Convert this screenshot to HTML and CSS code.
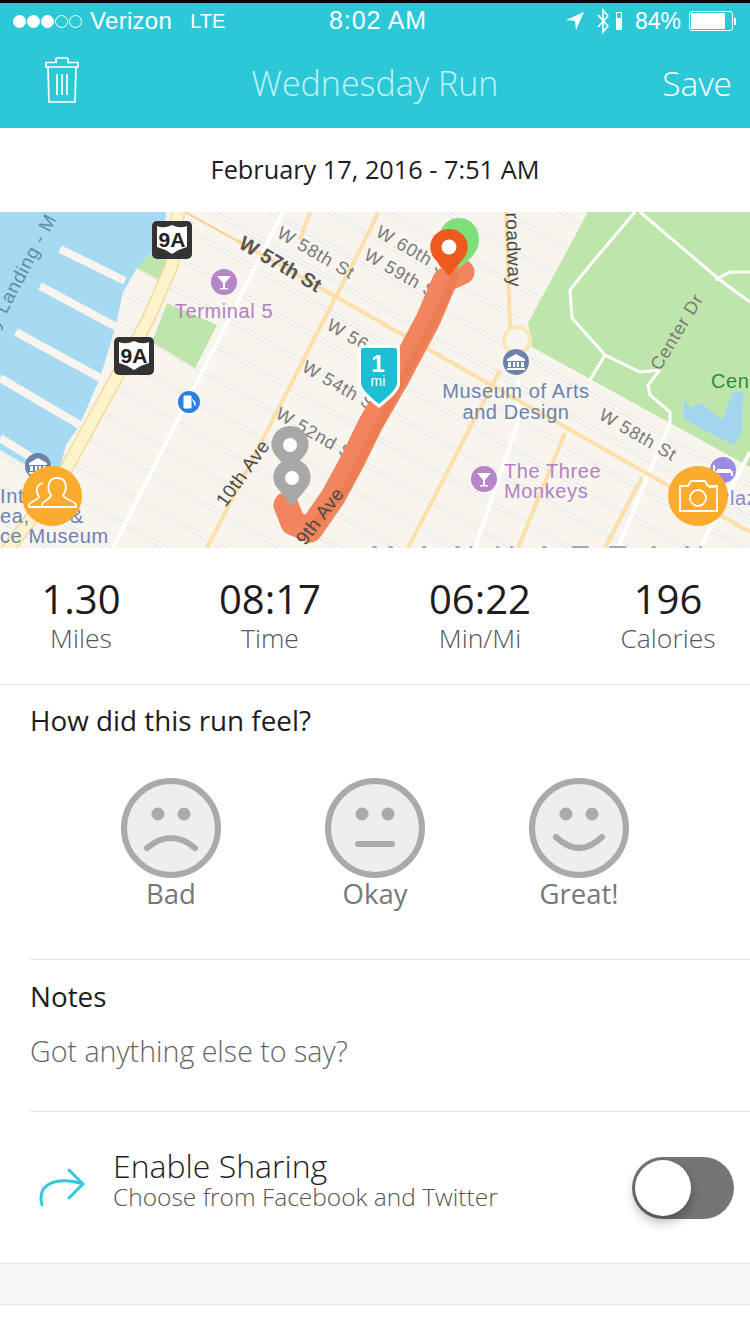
FILE: index.html
```html
<!DOCTYPE html>
<html lang="en">
<head>
<meta charset="utf-8">
<title>Wednesday Run</title>
<link rel="stylesheet" href="styles.css">
</head>
<body>
<div class="phone">
  <header class="head">
    <div class="status">
      <div class="status-left">
        <span class="sig on"></span><span class="sig on"></span><span class="sig on"></span><span class="sig"></span><span class="sig"></span>
        <span class="carrier">Verizon</span><span class="lte">LTE</span>
      </div>
      <div class="clock">8:02 AM</div>
      <div class="status-right">
        <svg class="st-loc" viewBox="0 0 18 18"><path d="M18 0 L0 8 L9 9 L10 18 Z" fill="#fff"/></svg>
        <svg class="st-bt" viewBox="0 0 12 26"><path d="M1 7 L11 18 L6 24 V2 L11 8 L1 19" fill="none" stroke="#fff" stroke-width="1.6"/></svg>
        <span class="st-mini"></span>
        <span class="pct">84%</span>
        <span class="batt"><span class="batt-fill"></span></span><span class="nub"></span>
      </div>
    </div>
    <nav class="nav">
      <svg class="trash" viewBox="0 0 34 46" fill="none" stroke="#fff" stroke-width="1.7">
        <path d="M1 10 V5.5 H11 V2 Q11 1 12 1 H22 Q23 1 23 2 V5.5 H33 V10 Z"/>
        <path d="M3 10 L4 45 H30 L31 10"/>
        <path d="M12 17 V38 M17 17 V38 M22 17 V38"/>
      </svg>
      <div class="title">Wednesday Run</div>
      <div class="save">Save</div>
    </nav>
  </header>

  <div class="date">February 17, 2016 - 7:51 AM</div>

  <svg class="map" viewBox="0 212 750 336">
    <defs>
      <pattern id="cross" width="300" height="28.7" patternUnits="userSpaceOnUse" patternTransform="rotate(29.7 0 212) translate(0 6)">
        <rect y="12.4" width="300" height="3.6" fill="#dedad4"/>
        <rect y="13.2" width="300" height="2" fill="#fff"/>
      </pattern>
      <g id="shield">
        <rect x="-20" y="-19" width="40" height="38" rx="5" fill="#333"/>
        <path d="M-15 -14 Q-8 -11 0 -15 Q8 -11 15 -14 V7 Q7 9 0 14 Q-7 9 -15 7 Z" fill="#fff"/>
      </g>
      <g id="martini">
        <path d="M-7 -6 H7 L1 1 V6 H4 V7.5 H-4 V6 H-1 V1 Z" fill="#fff"/>
      </g>
      <g id="museum">
        <path d="M0 -8 L9 -3 V-1 H-9 V-3 Z M-8 0 H-5 V5 H-8 Z M-3 0 H-0.8 V5 H-3 Z M0.8 0 H3 V5 H0.8 Z M5 0 H8 V5 H5 Z M-9 6 H9 V8 H-9 Z" fill="#fff"/>
      </g>
    </defs>
    <rect x="0" y="212" width="750" height="336" fill="#f8f4ee"/>
    <rect x="0" y="212" width="750" height="336" fill="url(#cross)"/>

    <path class="water" d="M0 212 H166 L163 240 L137 268 L123 292 L116 325 L100 378 L79 426 L66 445 L56 482 L0 450 Z"/>
    <g class="pier">
      <path d="M60 249 L125 281"/><path d="M40 286 L122 330"/><path d="M16 332 L104 380"/><path d="M0 378 L80 425"/><path d="M0 438 L58 474"/>
    </g>
    <path class="green" d="M137 268 L163 240 L167 262 L160 281 Z"/>
    <path class="green" d="M167 303 L217 325 L195 368 L152 342 Z"/>
    <path class="green" d="M588 212 H750 V467 L532 347 L528 323 Z"/>
    <path class="lake" d="M684 400 L692 408 L700 402 L722 420 L733 392 H743 L742 430 L735 445 L733 445 L700 428 L684 418 Z"/>
    <g class="parkroad">
      <path d="M635 212 L590 265 L570 290 L572 318 L605 355 L640 372 L660 370"/>
      <path d="M640 212 L720 280 L750 302"/>
      <path d="M715 280 L730 272 H750"/>
      <path d="M660 370 L648 385 L650 395 L670 412 V423"/>
      <path d="M605 355 L590 380"/>
    </g>
    <g class="white-ave">
      <path d="M113 548 L283 212"/>
      <path d="M475 548 L518 423 V380"/>
      <path d="M670 423 L618 548"/>
      <path d="M750 452 L700 548"/>
    </g>
    <g class="yellow">
      <path d="M207 548 L370 230 L378 212"/>
      <path d="M408 548 L500 370"/>
      <path d="M518 548 L565 433"/>
      <path d="M605 548 L642 477"/>
      <path d="M236 240 L750 532"/>
      <path d="M510 355 V325 L506 212"/>
      <path d="M310 212 L300 240"/>
    </g>
    <path class="hw-edge" d="M0 560 L60 480 L148 320 L172 265 L178 212"/>
    <path class="hw" d="M0 560 L60 480 L148 320 L172 265 L178 212"/>
    <path class="edge-thin" d="M185 212 L245 245"/>
    <circle class="rotary" cx="517" cy="340" r="13"/>

    <text class="st" transform="rotate(30 313 258)" x="313" y="258">W 58th St</text>
    <text class="st major" transform="rotate(30 277 270)" x="277" y="270">W 57th St</text>
    <text class="st" transform="rotate(30 345 340)" x="345" y="340">W 56</text>
    <text class="st" transform="rotate(30 338 392)" x="338" y="392">W 54th St</text>
    <text class="st" transform="rotate(30 314 440)" x="314" y="440">W 52nd St</text>
    <text class="st" transform="rotate(30 412 257)" x="412" y="257">W 60th St</text>
    <text class="st" transform="rotate(30 400 280)" x="400" y="280">W 59th St</text>
    <text class="st" transform="rotate(30 635 440)" x="635" y="440">W 58th St</text>
    <text class="st" transform="rotate(-59 682 335)" x="682" y="335">Center Dr</text>
    <text class="st strong" transform="rotate(88 507 250)" x="507" y="250">roadway</text>
    <text class="st strong" transform="rotate(-54 248 477)" x="248" y="477">10th Ave</text>

    <path class="route" d="M462 272 L445 280 L428 320 L396 380 L370 425 L353 460 L333 497 L310 530 L293 523 L286 505"/>
    <path class="route-b" d="M455 275 L435 320 L402 380 L376 430 L345 490 L312 527"/>
    <text class="st strong" transform="rotate(-53 325 520)" x="325" y="520">9th Ave</text>

    <g transform="translate(172 240)"><use href="#shield"/><text class="sh" y="7">9A</text></g>
    <g transform="translate(134 356)"><use href="#shield"/><text class="sh" y="7">9A</text></g>

    <circle class="poi-purple" cx="224" cy="282" r="13"/><use href="#martini" x="224" y="282"/>
    <text class="lbl purple" x="224" y="318">Terminal 5</text>
    <circle class="poi-blue" cx="189" cy="402" r="11"/>
    <path d="M184 396 H191 V408 H184 Z M192 399 L195 402 V406" fill="#fff" stroke="#fff"/>

    <circle class="poi-museum" cx="516" cy="362" r="13"/><use href="#museum" x="516" y="362"/>
    <text class="lbl blue" x="516" y="398">Museum of Arts</text>
    <text class="lbl blue" x="516" y="419">and Design</text>

    <circle class="poi-purple" cx="484" cy="479" r="13"/><use href="#martini" x="484" y="479"/>
    <text class="lbl purple start" x="504" y="478">The Three</text>
    <text class="lbl purple start" x="504" y="498">Monkeys</text>

    <circle class="poi-museum" cx="38" cy="466" r="13"/><use href="#museum" x="38" y="466"/>
    <text class="lbl blue start" x="0" y="503">Int</text>
    <text class="lbl blue start" x="-14" y="523">Sea,</text>
    <text class="lbl blue start" x="70" y="523">&amp;</text>
    <text class="lbl blue start" x="0" y="543">ce Museum</text>

    <circle class="poi-hotel" cx="723" cy="470" r="13"/>
    <path d="M714 465 V476 M714 472 H732 V476 M717 470 H731" fill="none" stroke="#fff" stroke-width="2"/>
    <text class="lbl hotel start" x="716" y="505">Plaza</text>

    <text class="lbl green-t start" x="711" y="388">Cen</text>
    <text class="st water-t" transform="rotate(-62 26 277)" x="26" y="277">ry Landing - M</text>
    <text class="manh" x="370" y="566">MANHATTAN</text>

    <path d="M459 218 C472 218 479 229 479 240 C479 252 468 262 459 268 C450 262 439 252 439 240 C439 229 446 218 459 218 Z" fill="#7fe07a"/>
    <path d="M290 426 a18 18 0 0 1 14 30 L290 472 L276 456 a18 18 0 0 1 14 -30 Z" fill="#a8a8a8"/>
    <circle cx="290" cy="445" r="7" fill="#fff"/>
    <path d="M292 459 a18 18 0 0 1 14 30 L292 506 L278 489 a18 18 0 0 1 14 -30 Z" fill="#a8a8a8"/>
    <circle cx="292" cy="478" r="7" fill="#fff"/>
    <path d="M449 229 a18 18 0 0 1 15 29 L449 276 L434 258 a18 18 0 0 1 15 -29 Z" fill="#ee5a1e"/>
    <circle cx="449" cy="247" r="7.5" fill="#fff"/>

    <path d="M362 345 H396 Q400 345 400 349 V384 Q400 392 379 408 Q358 392 358 384 V349 Q358 345 362 345 Z" fill="#fff"/>
    <path d="M363 348 H395 Q397 348 397 350 V383 Q397 390 379 404 Q361 390 361 383 V350 Q361 348 363 348 Z" fill="#1ebfd2"/>
    <text class="mile-n" x="378" y="372">1</text>
    <text class="mile-u" x="378" y="386">mi</text>

    <circle cx="52" cy="496" r="30" fill="#fbab2d"/>
    <g fill="none" stroke="#fff" stroke-width="1.8" stroke-linejoin="round">
      <path d="M42 507 H76 V505 C76 501 64 500 63 495 C67 490 68 478 57 478 C47 478 47 490 51 495 C50 500 42 501 42 505 Z"/>
      <path d="M42 507 H29 V505 C29 502 38 500 39 497 C36 492 35 485 43 483"/>
    </g>
    <circle cx="698" cy="496" r="30" fill="#fbab2d"/>
    <g fill="none" stroke="#fff" stroke-width="1.8">
      <path d="M680 486 H688 L691 481 H705 L708 486 H717 V511 H680 Z"/>
      <circle cx="698" cy="498" r="8"/>
      <path d="M709 487 H715" />
    </g>
  </svg>

  <section class="stats">
    <div class="stat"><div class="num">1.30</div><div class="cap">Miles</div></div>
    <div class="stat"><div class="num">08:17</div><div class="cap">Time</div></div>
    <div class="stat"><div class="num">06:22</div><div class="cap">Min/Mi</div></div>
    <div class="stat last"><div class="num">196</div><div class="cap">Calories</div></div>
  </section>

  <section class="feel">
    <h2 class="h">How did this run feel?</h2>
    <div class="faces">
      <div class="face">
        <svg class="face-ic" viewBox="0 0 100 100"><circle class="f-c" cx="50" cy="50" r="47"/><circle class="f-e" cx="37" cy="36" r="6.5"/><circle class="f-e" cx="63" cy="36" r="6.5"/><path class="f-m" d="M26 70 Q50 50 74 70"/></svg>
        <div class="face-l">Bad</div>
      </div>
      <div class="face">
        <svg class="face-ic" viewBox="0 0 100 100"><circle class="f-c" cx="50" cy="50" r="47"/><circle class="f-e" cx="37" cy="36" r="6.5"/><circle class="f-e" cx="63" cy="36" r="6.5"/><path class="f-m" d="M33 66 H67"/></svg>
        <div class="face-l">Okay</div>
      </div>
      <div class="face">
        <svg class="face-ic" viewBox="0 0 100 100"><circle class="f-c" cx="50" cy="50" r="47"/><circle class="f-e" cx="37" cy="36" r="6.5"/><circle class="f-e" cx="63" cy="36" r="6.5"/><path class="f-m" d="M27 59 Q50 81 73 59"/></svg>
        <div class="face-l">Great!</div>
      </div>
    </div>
  </section>

  <section class="notes">
    <h2 class="h">Notes</h2>
    <div class="ph">Got anything else to say?</div>
  </section>

  <section class="share">
    <svg class="arrow" viewBox="0 0 48 42" fill="none" stroke="#35c9d9" stroke-width="3" stroke-linecap="round" stroke-linejoin="round">
      <path d="M31 3 L45 17 L31 31"/>
      <path d="M45 17 C22 10 -2 14 4 38"/>
    </svg>
    <div class="share-t">
      <div class="share-h">Enable Sharing</div>
      <div class="share-s">Choose from Facebook and Twitter</div>
    </div>
    <div class="toggle"><span class="knob"></span></div>
  </section>

  <div class="band"></div>
</div>
</body>
</html>
```
FILE: styles.css
```css
* { box-sizing: border-box; }
html, body { margin: 0; padding: 0; background: #fff; }
body { font-family: "Open Sans", "Lato", "Liberation Sans", sans-serif; width: 750px; height: 1334px; overflow: hidden; }
.phone { width: 750px; height: 1334px; display: flex; flex-direction: column; }

.head { background: #2dc8d8; height: 128px; border-top: 3px solid #000; color: #fff; }
.status { height: 36px; display: flex; align-items: center; position: relative; padding: 0 13px; font-family: "Liberation Sans", sans-serif; font-size: 24px; }
.status-left { display: flex; align-items: center; }
.sig { width: 13px; height: 13px; border-radius: 50%; border: 1px solid #fff; margin-right: 1px; }
.sig.on { background: #fff; }
.carrier { margin-left: 7px; letter-spacing: .3px; }
.lte { margin-left: 18px; font-size: 20px; }
.clock { position: absolute; left: 6px; right: 0; top: 3px; text-align: center; font-size: 25px; letter-spacing: .9px; }
.status-right { margin-left: auto; display: flex; align-items: center; padding-right: 1px; }
.st-loc { width: 18px; height: 18px; }
.st-bt { width: 12px; height: 26px; margin-left: 13px; }
.st-mini { width: 6px; height: 18px; border: 1px solid #fff; margin-left: 7px; background: linear-gradient(#2dc8d8 30%, #fff 30%); }
.pct { margin-left: 13px; font-size: 23px; }
.batt { width: 44px; height: 20px; border: 1px solid #fff; border-radius: 3px; margin-left: 8px; padding: 1px; display: flex; }
.batt-fill { width: 84%; background: #fff; border-radius: 1px; }
.nub { width: 2px; height: 7px; background: #fff; margin-left: 1px; }

.nav { height: 89px; display: flex; align-items: center; position: relative; padding: 0 18px 2px 45px; }
.trash { width: 34px; height: 46px; margin-top: -6px; }
.title { position: absolute; left: 0; right: 0; text-align: center; font-weight: 300; font-size: 34px; line-height: 44px; color: #c2f2f6; }
.save { margin-left: auto; font-size: 33.5px; line-height: 44px; font-weight: 300; }

.date { height: 84px; padding-bottom: 3px; display: flex; align-items: center; justify-content: center; font-size: 25.3px; color: #1d1d1d; }

.map { display: block; width: 750px; height: 336px; flex: none; }
.water { fill: #a6d9f2; }
.lake { fill: #a3d5ee; }
.pier path { stroke: #f8f4ee; stroke-width: 8; fill: none; }
.green { fill: #bfe6aa; }
.parkroad path { fill: none; stroke: #fff; stroke-width: 3; }
.white-ave path { fill: none; stroke: #fff; stroke-width: 4; }
.yellow path { fill: none; stroke: #fbe0aa; stroke-width: 4; }
.hw-edge { fill: none; stroke: #f8d898; stroke-width: 14; }
.hw { fill: none; stroke: #fdf3cd; stroke-width: 11; }
.edge-thin { fill: none; stroke: #f8d48f; stroke-width: 2; }
.rotary { fill: #f8f4ee; stroke: #fbe6b8; stroke-width: 4; }
.route { fill: none; stroke: #f0855e; stroke-width: 25; stroke-linecap: round; stroke-linejoin: round; }
.route-b { fill: none; stroke: #ec7448; stroke-width: 8; stroke-linecap: round; stroke-linejoin: round; opacity: .5; }

.st { font-family: "Liberation Sans", sans-serif; font-size: 18px; letter-spacing: .8px; fill: #7a7a7a; text-anchor: middle; }
.st.major { font-size: 20px; letter-spacing: 0; font-weight: 700; fill: #555; }
.st.strong { font-size: 19px; letter-spacing: .4px; fill: #4a4a4a; }
.st.water-t { fill: #5f8da5; font-size: 19px; }
.sh { font-family: "Liberation Sans", sans-serif; font-weight: 700; font-size: 21px; fill: #222; text-anchor: middle; }
.lbl { font-family: "Liberation Sans", sans-serif; font-size: 20px; text-anchor: middle; letter-spacing: .6px; }
.lbl.start { text-anchor: start; }
.purple { fill: #b27fc4; }
.blue { fill: #6c83ae; }
.hotel { fill: #8f86cf; }
.green-t { fill: #2c8b3e; }
.poi-purple { fill: #b785c9; }
.poi-museum { fill: #6b82ad; }
.poi-blue { fill: #2b7fe0; }
.poi-hotel { fill: #9a8ce0; }
.manh { font-family: "Liberation Sans", sans-serif; font-size: 30px; fill: #a9a9a9; letter-spacing: 19px; }
.mile-n { font-family: "Liberation Sans", sans-serif; font-weight: 700; font-size: 24px; fill: #fff; text-anchor: middle; }
.mile-u { font-family: "Liberation Sans", sans-serif; font-size: 14px; fill: #fff; text-anchor: middle; }

.stats { height: 137px; border-bottom: 1px solid #e6e6e6; display: grid; grid-template-columns: 162px 216px 204px 168px; padding-top: 27px; flex: none; }
.stat { text-align: center; }
.stat.last { padding-left: 4px; }
.num { font-size: 40px; line-height: 48px; color: #1d1d1d; }
.cap { font-size: 26.5px; line-height: 30px; font-weight: 300; color: #555; }

.feel { height: 275px; margin-left: 30px; border-bottom: 1px solid #e6e6e6; flex: none; }
.h { margin: 0; font-weight: 400; font-size: 27.8px; line-height: 34px; color: #1d1d1d; }
.feel .h { margin-top: 18px; }
.faces { display: flex; justify-content: center; margin-left: -30px; margin-top: 41px; }
.face { width: 204px; display: flex; flex-direction: column; align-items: center; }
.face-ic { width: 100px; height: 100px; }
.f-c { fill: #eee; stroke: #aaa; stroke-width: 6; }
.f-e { fill: #aaa; }
.f-m { fill: none; stroke: #aaa; stroke-width: 6; stroke-linecap: round; }
.face-l { font-size: 27.5px; line-height: 31px; color: #777; }

.notes { height: 152px; margin-left: 30px; border-bottom: 1px solid #e6e6e6; padding-top: 19px; flex: none; }
.ph { font-size: 28.6px; font-weight: 300; color: #666; margin-top: 21px; line-height: 34px; }

.share { height: 151px; display: flex; align-items: center; padding: 0 16px 0 38px; flex: none; }
.arrow { width: 48px; height: 42px; }
.share-t { margin: -16px 0 0 27px; }
.share-h { font-size: 32px; font-weight: 300; color: #1d1d1d; line-height: 34px; }
.share-s { font-size: 24.5px; font-weight: 300; color: #555; line-height: 28px; }
.toggle { margin-left: auto; width: 102px; height: 62px; border-radius: 31px; background: #757575; padding: 3px; }
.knob { display: block; width: 56px; height: 56px; border-radius: 50%; background: #fff; box-shadow: 0 6px 12px rgba(0,0,0,.3); }

.band { height: 42px; background: #f6f6f6; border-top: 1px solid #e8e8e8; border-bottom: 1px solid #e8e8e8; flex: none; }
```
